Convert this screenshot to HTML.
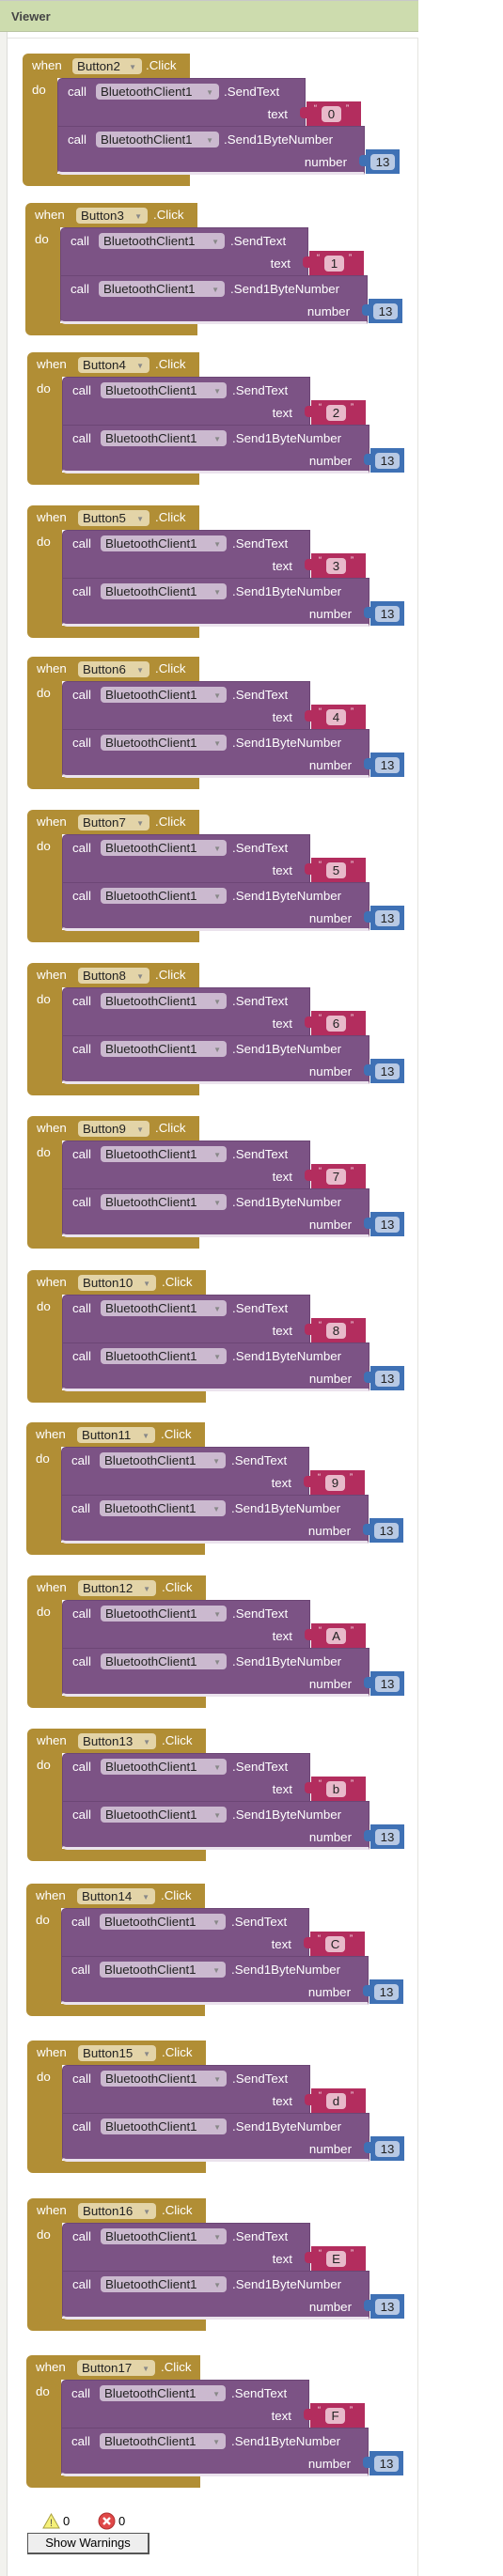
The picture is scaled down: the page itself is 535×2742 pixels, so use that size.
<!DOCTYPE html>
<html><head><meta charset="utf-8"><style>
*{margin:0;padding:0;box-sizing:border-box}
body{width:535px;height:2742px;background:#fff;position:relative;overflow:hidden;font-family:"Liberation Sans",Arial,sans-serif}
.hdr{position:absolute;left:0;top:0;width:445px;height:34px;background:#cddcae;border-top:1px solid #c8c8c8;border-bottom:1px solid #b8c4a0}
.hdr span{position:absolute;left:12px;top:9px;font-size:13px;font-weight:bold;color:#444}
.side{position:absolute;left:0;top:34px;width:8px;height:2708px;background:#f2f2ee;border-right:1px solid #dcdcd8}
.inner{position:absolute;left:8px;top:40px;width:437px;height:2702px;border-top:1px solid #e4e4e0;border-right:1px solid #e4e4e0}
.b{position:absolute;width:410px;height:141px;font-size:13.3px;color:#fff}
.b div{position:absolute}
.g{background:#b18e35}
.top{left:0;top:0;height:26px;border-radius:6px 0 0 0}
.arm{left:0;top:26px;width:37px;height:102px}
.bot{left:0;top:128px;height:13px;border-radius:0 0 0 6px}
.p{background:#7c5385;border:1px solid #6c4675}
.c1{left:37px;top:26px;width:264px;height:52px;border-radius:5px 0 0 0}
.c2{left:37px;top:77px;width:327px;height:52px;border-radius:0 0 0 5px;border-bottom:3px solid #ebe3ed}
.tx{left:302px;top:51px;width:58px;height:26px;background:#b32d5e}
.tx:before{content:"";position:absolute;left:-7px;top:6px;width:8px;height:12px;background:#b32d5e;border-radius:4px 0 0 4px}
.nm{left:365px;top:102px;width:36px;height:26px;background:#3f71b5}
.nm:before{content:"";position:absolute;left:-7px;top:6px;width:8px;height:12px;background:#3f71b5;border-radius:4px 0 0 4px}
.t{white-space:nowrap;line-height:16px}
.lt{right:18px;top:30px}
.c2 .lt{right:18px}
.dd{height:17px;border-radius:4px;color:#222;padding-left:5px;line-height:17px;white-space:nowrap}
.dd i{position:absolute;right:6px;top:1px;font-style:normal;font-size:8px;color:#888}
.dg{background:#e3d4a8}
.dp{background:#cbb9cf}
.fq{left:16px;top:5px;width:21px;height:17px;background:#e8b9ca;border-radius:4px;color:#222;text-align:center;line-height:17px}
.q1{left:8px;top:2px;font-size:9px}
.q2{left:42px;top:2px;font-size:9px}
.fn{left:5px;top:5px;width:26px;height:17px;background:#b8c9e4;border-radius:4px;color:#222;text-align:center;line-height:17px}
.warn{position:absolute;top:2676px;font-size:13px;color:#000}
.btn{position:absolute;left:29px;top:2696px;width:130px;height:23px;background:#eee;border:1px solid #555;border-right-width:2px;border-bottom-width:2px;font-size:13px;text-align:center;line-height:20px;color:#000}
</style></head><body>
<div class="hdr"><span>Viewer</span></div>
<div class="side"></div>
<div class="inner"></div>

<div class="b" style="left:24px;top:57px"><div class="g top" style="width:178px"></div><div class="g arm"></div><div class="g bot" style="width:178px"></div><div class="t" style="left:10px;top:5px">when</div><div class="dd dg" style="left:53px;top:5px;width:74px">Button2<i>▼</i></div><div class="t" style="left:131px;top:5px">.Click</div><div class="t" style="left:10px;top:31px">do</div><div class="p c1"><div class="t" style="left:10px;top:6px">call</div><div class="dd dp" style="left:40px;top:5px;width:131px">BluetoothClient1<i>▼</i></div><div class="t" style="left:176px;top:6px">.SendText</div><div class="t lt">text</div></div><div class="tx"><div class="q1">“</div><div class="fq">0</div><div class="q2">”</div></div><div class="p c2"><div class="t" style="left:10px;top:6px">call</div><div class="dd dp" style="left:40px;top:5px;width:131px">BluetoothClient1<i>▼</i></div><div class="t" style="left:176px;top:6px">.Send1ByteNumber</div><div class="t lt">number</div></div><div class="nm"><div class="fn">13</div></div></div>

<div class="b" style="left:27px;top:216px"><div class="g top" style="width:183px"></div><div class="g arm"></div><div class="g bot" style="width:183px"></div><div class="t" style="left:10px;top:5px">when</div><div class="dd dg" style="left:54px;top:5px;width:76px">Button3<i>▼</i></div><div class="t" style="left:136px;top:5px">.Click</div><div class="t" style="left:10px;top:31px">do</div><div class="p c1"><div class="t" style="left:10px;top:6px">call</div><div class="dd dp" style="left:40px;top:5px;width:134px">BluetoothClient1<i>▼</i></div><div class="t" style="left:180px;top:6px">.SendText</div><div class="t lt">text</div></div><div class="tx"><div class="q1">“</div><div class="fq">1</div><div class="q2">”</div></div><div class="p c2"><div class="t" style="left:10px;top:6px">call</div><div class="dd dp" style="left:40px;top:5px;width:134px">BluetoothClient1<i>▼</i></div><div class="t" style="left:180px;top:6px">.Send1ByteNumber</div><div class="t lt">number</div></div><div class="nm"><div class="fn">13</div></div></div>

<div class="b" style="left:29px;top:375px"><div class="g top" style="width:183px"></div><div class="g arm"></div><div class="g bot" style="width:183px"></div><div class="t" style="left:10px;top:5px">when</div><div class="dd dg" style="left:54px;top:5px;width:76px">Button4<i>▼</i></div><div class="t" style="left:136px;top:5px">.Click</div><div class="t" style="left:10px;top:31px">do</div><div class="p c1"><div class="t" style="left:10px;top:6px">call</div><div class="dd dp" style="left:40px;top:5px;width:134px">BluetoothClient1<i>▼</i></div><div class="t" style="left:180px;top:6px">.SendText</div><div class="t lt">text</div></div><div class="tx"><div class="q1">“</div><div class="fq">2</div><div class="q2">”</div></div><div class="p c2"><div class="t" style="left:10px;top:6px">call</div><div class="dd dp" style="left:40px;top:5px;width:134px">BluetoothClient1<i>▼</i></div><div class="t" style="left:180px;top:6px">.Send1ByteNumber</div><div class="t lt">number</div></div><div class="nm"><div class="fn">13</div></div></div>

<div class="b" style="left:29px;top:538px"><div class="g top" style="width:183px"></div><div class="g arm"></div><div class="g bot" style="width:183px"></div><div class="t" style="left:10px;top:5px">when</div><div class="dd dg" style="left:54px;top:5px;width:76px">Button5<i>▼</i></div><div class="t" style="left:136px;top:5px">.Click</div><div class="t" style="left:10px;top:31px">do</div><div class="p c1"><div class="t" style="left:10px;top:6px">call</div><div class="dd dp" style="left:40px;top:5px;width:134px">BluetoothClient1<i>▼</i></div><div class="t" style="left:180px;top:6px">.SendText</div><div class="t lt">text</div></div><div class="tx"><div class="q1">“</div><div class="fq">3</div><div class="q2">”</div></div><div class="p c2"><div class="t" style="left:10px;top:6px">call</div><div class="dd dp" style="left:40px;top:5px;width:134px">BluetoothClient1<i>▼</i></div><div class="t" style="left:180px;top:6px">.Send1ByteNumber</div><div class="t lt">number</div></div><div class="nm"><div class="fn">13</div></div></div>

<div class="b" style="left:29px;top:699px"><div class="g top" style="width:183px"></div><div class="g arm"></div><div class="g bot" style="width:183px"></div><div class="t" style="left:10px;top:5px">when</div><div class="dd dg" style="left:54px;top:5px;width:76px">Button6<i>▼</i></div><div class="t" style="left:136px;top:5px">.Click</div><div class="t" style="left:10px;top:31px">do</div><div class="p c1"><div class="t" style="left:10px;top:6px">call</div><div class="dd dp" style="left:40px;top:5px;width:134px">BluetoothClient1<i>▼</i></div><div class="t" style="left:180px;top:6px">.SendText</div><div class="t lt">text</div></div><div class="tx"><div class="q1">“</div><div class="fq">4</div><div class="q2">”</div></div><div class="p c2"><div class="t" style="left:10px;top:6px">call</div><div class="dd dp" style="left:40px;top:5px;width:134px">BluetoothClient1<i>▼</i></div><div class="t" style="left:180px;top:6px">.Send1ByteNumber</div><div class="t lt">number</div></div><div class="nm"><div class="fn">13</div></div></div>

<div class="b" style="left:29px;top:862px"><div class="g top" style="width:183px"></div><div class="g arm"></div><div class="g bot" style="width:183px"></div><div class="t" style="left:10px;top:5px">when</div><div class="dd dg" style="left:54px;top:5px;width:76px">Button7<i>▼</i></div><div class="t" style="left:136px;top:5px">.Click</div><div class="t" style="left:10px;top:31px">do</div><div class="p c1"><div class="t" style="left:10px;top:6px">call</div><div class="dd dp" style="left:40px;top:5px;width:134px">BluetoothClient1<i>▼</i></div><div class="t" style="left:180px;top:6px">.SendText</div><div class="t lt">text</div></div><div class="tx"><div class="q1">“</div><div class="fq">5</div><div class="q2">”</div></div><div class="p c2"><div class="t" style="left:10px;top:6px">call</div><div class="dd dp" style="left:40px;top:5px;width:134px">BluetoothClient1<i>▼</i></div><div class="t" style="left:180px;top:6px">.Send1ByteNumber</div><div class="t lt">number</div></div><div class="nm"><div class="fn">13</div></div></div>

<div class="b" style="left:29px;top:1025px"><div class="g top" style="width:183px"></div><div class="g arm"></div><div class="g bot" style="width:183px"></div><div class="t" style="left:10px;top:5px">when</div><div class="dd dg" style="left:54px;top:5px;width:76px">Button8<i>▼</i></div><div class="t" style="left:136px;top:5px">.Click</div><div class="t" style="left:10px;top:31px">do</div><div class="p c1"><div class="t" style="left:10px;top:6px">call</div><div class="dd dp" style="left:40px;top:5px;width:134px">BluetoothClient1<i>▼</i></div><div class="t" style="left:180px;top:6px">.SendText</div><div class="t lt">text</div></div><div class="tx"><div class="q1">“</div><div class="fq">6</div><div class="q2">”</div></div><div class="p c2"><div class="t" style="left:10px;top:6px">call</div><div class="dd dp" style="left:40px;top:5px;width:134px">BluetoothClient1<i>▼</i></div><div class="t" style="left:180px;top:6px">.Send1ByteNumber</div><div class="t lt">number</div></div><div class="nm"><div class="fn">13</div></div></div>

<div class="b" style="left:29px;top:1188px"><div class="g top" style="width:183px"></div><div class="g arm"></div><div class="g bot" style="width:183px"></div><div class="t" style="left:10px;top:5px">when</div><div class="dd dg" style="left:54px;top:5px;width:76px">Button9<i>▼</i></div><div class="t" style="left:136px;top:5px">.Click</div><div class="t" style="left:10px;top:31px">do</div><div class="p c1"><div class="t" style="left:10px;top:6px">call</div><div class="dd dp" style="left:40px;top:5px;width:134px">BluetoothClient1<i>▼</i></div><div class="t" style="left:180px;top:6px">.SendText</div><div class="t lt">text</div></div><div class="tx"><div class="q1">“</div><div class="fq">7</div><div class="q2">”</div></div><div class="p c2"><div class="t" style="left:10px;top:6px">call</div><div class="dd dp" style="left:40px;top:5px;width:134px">BluetoothClient1<i>▼</i></div><div class="t" style="left:180px;top:6px">.Send1ByteNumber</div><div class="t lt">number</div></div><div class="nm"><div class="fn">13</div></div></div>

<div class="b" style="left:29px;top:1352px"><div class="g top" style="width:190px"></div><div class="g arm"></div><div class="g bot" style="width:190px"></div><div class="t" style="left:10px;top:5px">when</div><div class="dd dg" style="left:54px;top:5px;width:83px">Button10<i>▼</i></div><div class="t" style="left:143px;top:5px">.Click</div><div class="t" style="left:10px;top:31px">do</div><div class="p c1"><div class="t" style="left:10px;top:6px">call</div><div class="dd dp" style="left:40px;top:5px;width:134px">BluetoothClient1<i>▼</i></div><div class="t" style="left:180px;top:6px">.SendText</div><div class="t lt">text</div></div><div class="tx"><div class="q1">“</div><div class="fq">8</div><div class="q2">”</div></div><div class="p c2"><div class="t" style="left:10px;top:6px">call</div><div class="dd dp" style="left:40px;top:5px;width:134px">BluetoothClient1<i>▼</i></div><div class="t" style="left:180px;top:6px">.Send1ByteNumber</div><div class="t lt">number</div></div><div class="nm"><div class="fn">13</div></div></div>

<div class="b" style="left:28px;top:1514px"><div class="g top" style="width:190px"></div><div class="g arm"></div><div class="g bot" style="width:190px"></div><div class="t" style="left:10px;top:5px">when</div><div class="dd dg" style="left:54px;top:5px;width:83px">Button11<i>▼</i></div><div class="t" style="left:143px;top:5px">.Click</div><div class="t" style="left:10px;top:31px">do</div><div class="p c1"><div class="t" style="left:10px;top:6px">call</div><div class="dd dp" style="left:40px;top:5px;width:134px">BluetoothClient1<i>▼</i></div><div class="t" style="left:180px;top:6px">.SendText</div><div class="t lt">text</div></div><div class="tx"><div class="q1">“</div><div class="fq">9</div><div class="q2">”</div></div><div class="p c2"><div class="t" style="left:10px;top:6px">call</div><div class="dd dp" style="left:40px;top:5px;width:134px">BluetoothClient1<i>▼</i></div><div class="t" style="left:180px;top:6px">.Send1ByteNumber</div><div class="t lt">number</div></div><div class="nm"><div class="fn">13</div></div></div>

<div class="b" style="left:29px;top:1677px"><div class="g top" style="width:190px"></div><div class="g arm"></div><div class="g bot" style="width:190px"></div><div class="t" style="left:10px;top:5px">when</div><div class="dd dg" style="left:54px;top:5px;width:83px">Button12<i>▼</i></div><div class="t" style="left:143px;top:5px">.Click</div><div class="t" style="left:10px;top:31px">do</div><div class="p c1"><div class="t" style="left:10px;top:6px">call</div><div class="dd dp" style="left:40px;top:5px;width:134px">BluetoothClient1<i>▼</i></div><div class="t" style="left:180px;top:6px">.SendText</div><div class="t lt">text</div></div><div class="tx"><div class="q1">“</div><div class="fq">A</div><div class="q2">”</div></div><div class="p c2"><div class="t" style="left:10px;top:6px">call</div><div class="dd dp" style="left:40px;top:5px;width:134px">BluetoothClient1<i>▼</i></div><div class="t" style="left:180px;top:6px">.Send1ByteNumber</div><div class="t lt">number</div></div><div class="nm"><div class="fn">13</div></div></div>

<div class="b" style="left:29px;top:1840px"><div class="g top" style="width:190px"></div><div class="g arm"></div><div class="g bot" style="width:190px"></div><div class="t" style="left:10px;top:5px">when</div><div class="dd dg" style="left:54px;top:5px;width:83px">Button13<i>▼</i></div><div class="t" style="left:143px;top:5px">.Click</div><div class="t" style="left:10px;top:31px">do</div><div class="p c1"><div class="t" style="left:10px;top:6px">call</div><div class="dd dp" style="left:40px;top:5px;width:134px">BluetoothClient1<i>▼</i></div><div class="t" style="left:180px;top:6px">.SendText</div><div class="t lt">text</div></div><div class="tx"><div class="q1">“</div><div class="fq">b</div><div class="q2">”</div></div><div class="p c2"><div class="t" style="left:10px;top:6px">call</div><div class="dd dp" style="left:40px;top:5px;width:134px">BluetoothClient1<i>▼</i></div><div class="t" style="left:180px;top:6px">.Send1ByteNumber</div><div class="t lt">number</div></div><div class="nm"><div class="fn">13</div></div></div>

<div class="b" style="left:28px;top:2005px"><div class="g top" style="width:190px"></div><div class="g arm"></div><div class="g bot" style="width:190px"></div><div class="t" style="left:10px;top:5px">when</div><div class="dd dg" style="left:54px;top:5px;width:83px">Button14<i>▼</i></div><div class="t" style="left:143px;top:5px">.Click</div><div class="t" style="left:10px;top:31px">do</div><div class="p c1"><div class="t" style="left:10px;top:6px">call</div><div class="dd dp" style="left:40px;top:5px;width:134px">BluetoothClient1<i>▼</i></div><div class="t" style="left:180px;top:6px">.SendText</div><div class="t lt">text</div></div><div class="tx"><div class="q1">“</div><div class="fq">C</div><div class="q2">”</div></div><div class="p c2"><div class="t" style="left:10px;top:6px">call</div><div class="dd dp" style="left:40px;top:5px;width:134px">BluetoothClient1<i>▼</i></div><div class="t" style="left:180px;top:6px">.Send1ByteNumber</div><div class="t lt">number</div></div><div class="nm"><div class="fn">13</div></div></div>

<div class="b" style="left:29px;top:2172px"><div class="g top" style="width:190px"></div><div class="g arm"></div><div class="g bot" style="width:190px"></div><div class="t" style="left:10px;top:5px">when</div><div class="dd dg" style="left:54px;top:5px;width:83px">Button15<i>▼</i></div><div class="t" style="left:143px;top:5px">.Click</div><div class="t" style="left:10px;top:31px">do</div><div class="p c1"><div class="t" style="left:10px;top:6px">call</div><div class="dd dp" style="left:40px;top:5px;width:134px">BluetoothClient1<i>▼</i></div><div class="t" style="left:180px;top:6px">.SendText</div><div class="t lt">text</div></div><div class="tx"><div class="q1">“</div><div class="fq">d</div><div class="q2">”</div></div><div class="p c2"><div class="t" style="left:10px;top:6px">call</div><div class="dd dp" style="left:40px;top:5px;width:134px">BluetoothClient1<i>▼</i></div><div class="t" style="left:180px;top:6px">.Send1ByteNumber</div><div class="t lt">number</div></div><div class="nm"><div class="fn">13</div></div></div>

<div class="b" style="left:29px;top:2340px"><div class="g top" style="width:190px"></div><div class="g arm"></div><div class="g bot" style="width:190px"></div><div class="t" style="left:10px;top:5px">when</div><div class="dd dg" style="left:54px;top:5px;width:83px">Button16<i>▼</i></div><div class="t" style="left:143px;top:5px">.Click</div><div class="t" style="left:10px;top:31px">do</div><div class="p c1"><div class="t" style="left:10px;top:6px">call</div><div class="dd dp" style="left:40px;top:5px;width:134px">BluetoothClient1<i>▼</i></div><div class="t" style="left:180px;top:6px">.SendText</div><div class="t lt">text</div></div><div class="tx"><div class="q1">“</div><div class="fq">E</div><div class="q2">”</div></div><div class="p c2"><div class="t" style="left:10px;top:6px">call</div><div class="dd dp" style="left:40px;top:5px;width:134px">BluetoothClient1<i>▼</i></div><div class="t" style="left:180px;top:6px">.Send1ByteNumber</div><div class="t lt">number</div></div><div class="nm"><div class="fn">13</div></div></div>

<div class="b" style="left:28px;top:2507px"><div class="g top" style="width:185px"></div><div class="g arm"></div><div class="g bot" style="width:185px"></div><div class="t" style="left:10px;top:5px">when</div><div class="dd dg" style="left:54px;top:5px;width:83px">Button17<i>▼</i></div><div class="t" style="left:143px;top:5px">.Click</div><div class="t" style="left:10px;top:31px">do</div><div class="p c1"><div class="t" style="left:10px;top:6px">call</div><div class="dd dp" style="left:40px;top:5px;width:134px">BluetoothClient1<i>▼</i></div><div class="t" style="left:180px;top:6px">.SendText</div><div class="t lt">text</div></div><div class="tx"><div class="q1">“</div><div class="fq">F</div><div class="q2">”</div></div><div class="p c2"><div class="t" style="left:10px;top:6px">call</div><div class="dd dp" style="left:40px;top:5px;width:134px">BluetoothClient1<i>▼</i></div><div class="t" style="left:180px;top:6px">.Send1ByteNumber</div><div class="t lt">number</div></div><div class="nm"><div class="fn">13</div></div></div>

<svg style="position:absolute;left:45px;top:2675px" width="19" height="17" viewBox="0 0 19 17"><path d="M9.5 1 L18 16 L1 16 Z" fill="#f5f07a" stroke="#a8a040" stroke-width="1"/><text x="9.5" y="14" font-size="11" text-anchor="middle" fill="#555" font-family="Liberation Sans">!</text></svg>
<div class="warn" style="left:67px">0</div>
<svg style="position:absolute;left:104px;top:2674px" width="19" height="19" viewBox="0 0 19 19"><circle cx="9.5" cy="9.5" r="8.5" fill="#e04848" stroke="#b03030"/><path d="M6 6 L13 13 M13 6 L6 13" stroke="#fff" stroke-width="2.4"/></svg>
<div class="warn" style="left:126px">0</div>
<div class="btn">Show Warnings</div>
</body></html>
